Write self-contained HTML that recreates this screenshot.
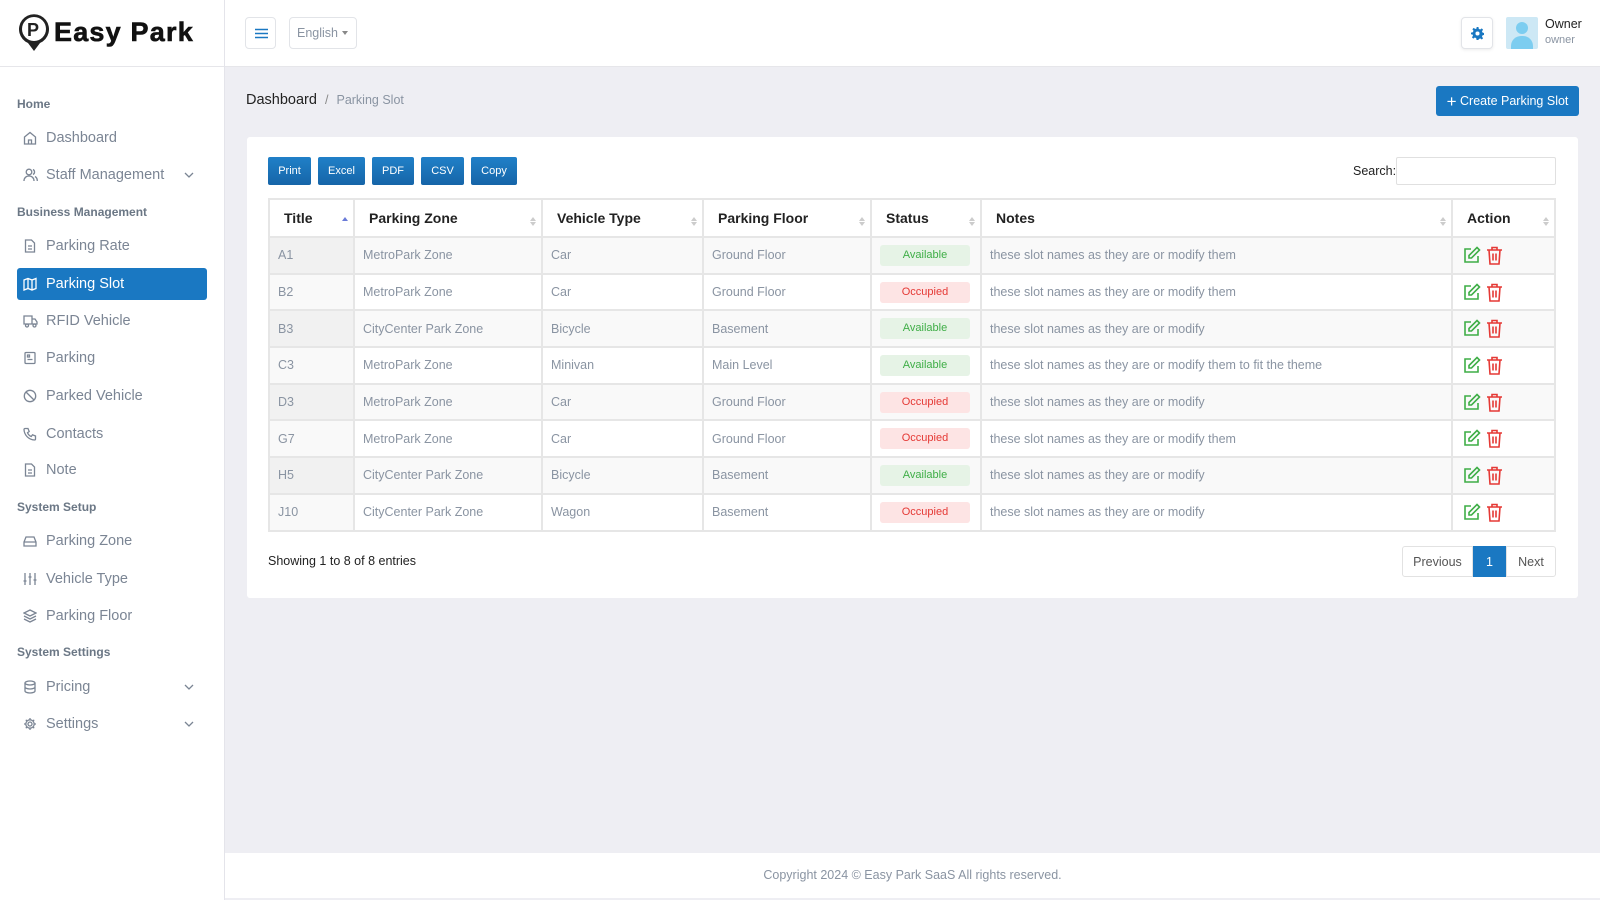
<!DOCTYPE html>
<html><head><meta charset="utf-8"><style>
*{box-sizing:border-box;margin:0;padding:0}
body{width:1600px;height:900px;overflow:hidden;font-family:"Liberation Sans",sans-serif;background:#eeeef3;position:relative;color:#222}
.sb{position:absolute;left:0;top:0;width:225px;height:900px;background:#fff;border-right:1px solid #e4e4ea}
.logo{height:67px;border-bottom:1px solid #e6e6ea;position:relative}
.logo .t{position:absolute;left:54px;top:17px;font-weight:900;font-size:27px;letter-spacing:1.2px;color:#111;-webkit-text-stroke:.6px #111}
.sec{position:absolute;left:17px;font-size:12px;font-weight:bold;color:#6b7785}
.it{position:absolute;left:17px;width:190px;height:32px;font-size:14.5px;color:#7b8594;line-height:32px;padding-left:29px;border-radius:3px}
.it svg{position:absolute;left:6px;top:9px}
.it svg.chev{left:auto;right:12px;top:10px}
.it.act{background:#1a78c2;color:#fff}
.hdr{position:absolute;left:225px;top:0;right:0;height:67px;background:#fff;border-bottom:1px solid #e6e6ea}
.btnb{position:absolute;border:1px solid #e2e4e8;border-radius:4px;background:#fff}
.bc{position:absolute;left:246px;top:92px;font-size:14.5px;color:#222}
.bc span{color:#8a94a2;font-size:12.5px}
.create{position:absolute;left:1436px;top:86px;width:143px;height:30px;background:#1a78c2;color:#fff;border-radius:3px;font-size:12.5px;line-height:30px;text-align:center}
.card{position:absolute;left:247px;top:137px;width:1331px;height:461px;background:#fff;border-radius:3px}
.eb{position:absolute;top:157px;height:28px;color:#fff;font-size:11px;line-height:28px;text-align:center;border-radius:2px;background:linear-gradient(#2080c8,#1665a8)}
table{position:absolute;left:268px;top:198px;width:1288px;border-collapse:collapse;font-size:12.5px}
td,th{border:2px solid #e6e6e6;padding:0 8px;text-align:left;color:#8a94a2;height:36.7px}
th{color:#222;font-size:14px;height:38px;padding-left:14px;position:relative}
th:after{content:"";position:absolute;right:5px;top:14px;border:3px solid transparent;border-bottom:4px solid #ccc;height:0}
th:before{content:"";position:absolute;right:5px;top:22px;border:3px solid transparent;border-top:4px solid #ccc}
th.s:after{border-bottom-color:#6a7bd8}th.s:before{display:none}
tr:nth-child(even) td{background:#f9f9f9}
tr:nth-child(even) td:first-child{background:#f1f1f1}
tr:nth-child(odd) td:first-child{background:#f9f9f9}
.bd{display:block;width:90px;height:21px;line-height:21px;text-align:center;font-size:11px;border-radius:3px}
.av{background:#e6f3e6;color:#3fae47}.oc{background:#fde4e4;color:#e53935}
.pg{position:absolute;top:546px;height:31px;font-size:12.5px;line-height:31px;text-align:center;border:1px solid #e2e2e2;color:#555;background:#fff}
.ft{position:absolute;left:225px;right:0;top:853px;height:45px;background:#fff;text-align:center;line-height:45px;font-size:12.5px;color:#8a94a2}
</style></head><body>
<div class="sb">
<div class="logo">
<svg style="position:absolute;left:18px;top:14px" width="32" height="38" viewBox="0 0 32 38"><path d="M16 37 L10 29 A15 15 0 1 1 22 29 Z" fill="#222"/><circle cx="16" cy="15" r="12" fill="#fff"/><text x="9" y="22" font-family="Liberation Sans" font-weight="bold" font-size="18" fill="#222">P</text></svg>
<div class="t">Easy Park</div></div>
<div class="sec" style="top:97px">Home</div>
<div class="it" style="top:122px"><svg width="14" height="14" viewBox="0 0 14 14" fill="none" stroke="#7b8594" stroke-width="1.3"><path d="M1.5 6 7 1.5 12.5 6V13H1.5Z M5.5 13V9h3v4"/></svg>Dashboard</div>
<div class="it" style="top:159px"><svg width="15" height="14" viewBox="0 0 15 14" fill="none" stroke="#7b8594" stroke-width="1.3"><circle cx="6" cy="4" r="2.8"/><path d="M1 13c0-3 2-5 5-5s5 2 5 5M10 1.5a2.8 2.8 0 0 1 0 5M12 8.5c1.5.8 2.3 2.5 2.3 4.5"/></svg>Staff Management<svg class="chev" width="12" height="12" viewBox="0 0 12 12" fill="none" stroke="#7b8594" stroke-width="1.3"><path d="M2 4l4 4 4-4"/></svg></div>
<div class="sec" style="top:205px">Business Management</div>
<div class="it" style="top:230px"><svg width="14" height="14" viewBox="0 0 14 14" fill="none" stroke="#7b8594" stroke-width="1.3"><path d="M2.5 1h6l3 3v9h-9Z M5 7h4M5 10h4"/></svg>Parking Rate</div>
<div class="it act" style="top:268px"><svg width="14" height="14" viewBox="0 0 14 14" fill="none" stroke="#fff" stroke-width="1.3"><path d="M1 3l4-1.5 4 1.5 4-1.5v10l-4 1.5-4-1.5-4 1.5Z M5 1.5v10M9 3v10"/></svg>Parking Slot</div>
<div class="it" style="top:305px"><svg width="15" height="14" viewBox="0 0 15 14" fill="none" stroke="#7b8594" stroke-width="1.3"><path d="M1 2h8v8H1Z M9 5h3l2 3v2H9"/><circle cx="4" cy="11.5" r="1.5"/><circle cx="11.5" cy="11.5" r="1.5"/></svg>RFID Vehicle</div>
<div class="it" style="top:342px"><svg width="14" height="14" viewBox="0 0 14 14" fill="none" stroke="#7b8594" stroke-width="1.3"><rect x="2" y="1.5" width="10" height="11" rx="1"/><path d="M4.5 4h2v2h-2zM4.5 8.5h5"/></svg>Parking</div>
<div class="it" style="top:380px"><svg width="14" height="14" viewBox="0 0 14 14" fill="none" stroke="#7b8594" stroke-width="1.3"><circle cx="7" cy="7" r="5.7"/><path d="M3 3l8 8"/></svg>Parked Vehicle</div>
<div class="it" style="top:418px"><svg width="14" height="14" viewBox="0 0 14 14" fill="none" stroke="#7b8594" stroke-width="1.3"><path d="M2 1.5h3l1.2 3-1.7 1.2a7 7 0 0 0 3.8 3.8l1.2-1.7 3 1.2v3A1 1 0 0 1 11.5 13 11 11 0 0 1 1 2.5a1 1 0 0 1 1-1Z"/></svg>Contacts</div>
<div class="it" style="top:454px"><svg width="14" height="14" viewBox="0 0 14 14" fill="none" stroke="#7b8594" stroke-width="1.3"><path d="M2.5 1h6l3 3v9h-9Z M5 7h4M5 10h4"/></svg>Note</div>
<div class="sec" style="top:500px">System Setup</div>
<div class="it" style="top:525px"><svg width="14" height="14" viewBox="0 0 14 14" fill="none" stroke="#7b8594" stroke-width="1.3"><path d="M1 8l2-5h8l2 5v4H1Z M1 8h12"/></svg>Parking Zone</div>
<div class="it" style="top:563px"><svg width="14" height="14" viewBox="0 0 14 14" fill="none" stroke="#7b8594" stroke-width="1.3"><path d="M2 1v12M7 1v12M12 1v12M0.5 9h3M5.5 5h3M10.5 8h3"/></svg>Vehicle Type</div>
<div class="it" style="top:600px"><svg width="14" height="14" viewBox="0 0 14 14" fill="none" stroke="#7b8594" stroke-width="1.3"><path d="M7 1l6 3-6 3-6-3Z M1 7l6 3 6-3M1 10l6 3 6-3"/></svg>Parking Floor</div>
<div class="sec" style="top:645px">System Settings</div>
<div class="it" style="top:671px"><svg width="14" height="14" viewBox="0 0 14 14" fill="none" stroke="#7b8594" stroke-width="1.3"><ellipse cx="7" cy="3" rx="5" ry="2"/><path d="M2 3v8c0 1.1 2.2 2 5 2s5-.9 5-2V3M2 7c0 1.1 2.2 2 5 2s5-.9 5-2"/></svg>Pricing<svg class="chev" width="12" height="12" viewBox="0 0 12 12" fill="none" stroke="#7b8594" stroke-width="1.3"><path d="M2 4l4 4 4-4"/></svg></div>
<div class="it" style="top:708px"><svg width="14" height="14" viewBox="0 0 14 14" fill="none" stroke="#7b8594" stroke-width="1.3"><circle cx="7" cy="7" r="2"/><path d="M7 1v2M7 11v2M1 7h2M11 7h2M2.8 2.8l1.4 1.4M9.8 9.8l1.4 1.4M2.8 11.2l1.4-1.4M9.8 4.2l1.4-1.4"/><circle cx="7" cy="7" r="4.2"/></svg>Settings<svg class="chev" width="12" height="12" viewBox="0 0 12 12" fill="none" stroke="#7b8594" stroke-width="1.3"><path d="M2 4l4 4 4-4"/></svg></div>
</div>
<div class="hdr"></div>
<div class="btnb" style="left:245px;top:17px;width:31px;height:32px"><svg style="position:absolute;left:9px;top:10px" width="13" height="11" viewBox="0 0 13 11" stroke="#1a78c2" stroke-width="1.5"><path d="M0 1.5h13M0 5.5h13M0 9.5h13"/></svg></div>
<div class="btnb" style="left:289px;top:17px;width:68px;height:32px;font-size:12.5px;color:#8a94a2;line-height:30px;padding-left:7px">English<span style="position:absolute;right:8px;top:13px;border:3.5px solid transparent;border-top:4px solid #888"></span></div>
<div class="btnb" style="left:1461px;top:17px;width:32px;height:32px;box-shadow:0 1px 3px rgba(0,0,0,.08)"><svg style="position:absolute;left:9px;top:9px" width="13" height="13" viewBox="0 0 14 14"><path fill="#1a78c2" d="M6 0h2l.4 2 1.5.7 1.7-1.2 1.4 1.4-1.2 1.7.7 1.5 2 .4v2l-2 .4-.7 1.5 1.2 1.7-1.4 1.4-1.7-1.2-1.5.7L8 14H6l-.4-2-1.5-.7-1.7 1.2-1.4-1.4 1.2-1.7-.7-1.5L0 8V6l2-.4.7-1.5-1.2-1.7 1.4-1.4 1.7 1.2 1.5-.7Z"/><circle cx="7" cy="7" r="2.2" fill="#fff"/></svg></div>
<div style="position:absolute;left:1506px;top:17px;width:32px;height:32px;background:#cde8f5;border-radius:2px;overflow:hidden"><div style="position:absolute;left:10px;top:5px;width:12px;height:12px;border-radius:50%;background:#7ccdf0"></div><div style="position:absolute;left:5px;top:19px;width:22px;height:16px;border-radius:10px 10px 0 0;background:#7ccdf0"></div></div>
<div style="position:absolute;left:1545px;top:17px;font-size:12.5px;color:#222">Owner</div>
<div style="position:absolute;left:1545px;top:34px;font-size:11px;color:#8a94a2">owner</div>
<div class="bc">Dashboard <span style="color:#888;margin:0 4px">/</span> <span>Parking Slot</span></div>
<div class="create"><span style="font-size:17px;vertical-align:-2px">+</span> Create Parking Slot</div>
<div class="card"></div>
<div class="eb" style="left:268px;width:43px">Print</div>
<div class="eb" style="left:318px;width:47px">Excel</div>
<div class="eb" style="left:372px;width:42px">PDF</div>
<div class="eb" style="left:421px;width:43px">CSV</div>
<div class="eb" style="left:471px;width:46px">Copy</div>
<div style="position:absolute;left:1353px;top:164px;font-size:12.5px">Search:</div>
<div style="position:absolute;left:1396px;top:157px;width:160px;height:28px;border:1px solid #e0e0e0;border-radius:2px"></div>
<table>
<colgroup><col style="width:85px"><col style="width:188px"><col style="width:161px"><col style="width:168px"><col style="width:110px"><col style="width:471px"><col></colgroup>
<tr><th class="s">Title</th><th>Parking Zone</th><th>Vehicle Type</th><th>Parking Floor</th><th>Status</th><th>Notes</th><th>Action</th></tr>
<tr><td>A1</td><td>MetroPark Zone</td><td>Car</td><td>Ground Floor</td><td><span class="bd av">Available</span></td><td>these slot names as they are or modify them</td><td>ICONS</td></tr>
<tr><td>B2</td><td>MetroPark Zone</td><td>Car</td><td>Ground Floor</td><td><span class="bd oc">Occupied</span></td><td>these slot names as they are or modify them</td><td>ICONS</td></tr>
<tr><td>B3</td><td>CityCenter Park Zone</td><td>Bicycle</td><td>Basement</td><td><span class="bd av">Available</span></td><td>these slot names as they are or modify</td><td>ICONS</td></tr>
<tr><td>C3</td><td>MetroPark Zone</td><td>Minivan</td><td>Main Level</td><td><span class="bd av">Available</span></td><td>these slot names as they are or modify them to fit the theme</td><td>ICONS</td></tr>
<tr><td>D3</td><td>MetroPark Zone</td><td>Car</td><td>Ground Floor</td><td><span class="bd oc">Occupied</span></td><td>these slot names as they are or modify</td><td>ICONS</td></tr>
<tr><td>G7</td><td>MetroPark Zone</td><td>Car</td><td>Ground Floor</td><td><span class="bd oc">Occupied</span></td><td>these slot names as they are or modify them</td><td>ICONS</td></tr>
<tr><td>H5</td><td>CityCenter Park Zone</td><td>Bicycle</td><td>Basement</td><td><span class="bd av">Available</span></td><td>these slot names as they are or modify</td><td>ICONS</td></tr>
<tr><td>J10</td><td>CityCenter Park Zone</td><td>Wagon</td><td>Basement</td><td><span class="bd oc">Occupied</span></td><td>these slot names as they are or modify</td><td>ICONS</td></tr>
</table>
<div style="position:absolute;left:268px;top:554px;font-size:12.5px">Showing 1 to 8 of 8 entries</div>
<div class="pg" style="left:1402px;width:71px;border-radius:3px 0 0 3px">Previous</div>
<div class="pg" style="left:1473px;width:33px;background:#1a78c2;color:#fff;border-color:#1a78c2">1</div>
<div class="pg" style="left:1506px;width:50px;border-radius:0 3px 3px 0">Next</div>
<div class="ft">Copyright 2024 © Easy Park SaaS All rights reserved.</div>
<script>
var ic='<svg width="19" height="19" viewBox="0 0 19 19" fill="none" stroke="#3fae47" stroke-width="1.6" style="vertical-align:middle"><path d="M9 3H3v13h13v-6"/><path d="M15 1.5l2.5 2.5-8 8H7V9.5Z"/></svg> <svg width="17" height="19" viewBox="0 0 17 19" fill="none" stroke="#e53935" stroke-width="1.6" style="vertical-align:middle;margin-left:2px"><path d="M1 4h15M6 4V1.5h5V4M3 4l1 14h9l1-14M7 7.5v7M10 7.5v7"/></svg>';
document.querySelectorAll('td').forEach(function(t){if(t.textContent=='ICONS'){t.innerHTML=ic;t.style.padding='0 0 0 9px'}});
</script>
</body></html>
